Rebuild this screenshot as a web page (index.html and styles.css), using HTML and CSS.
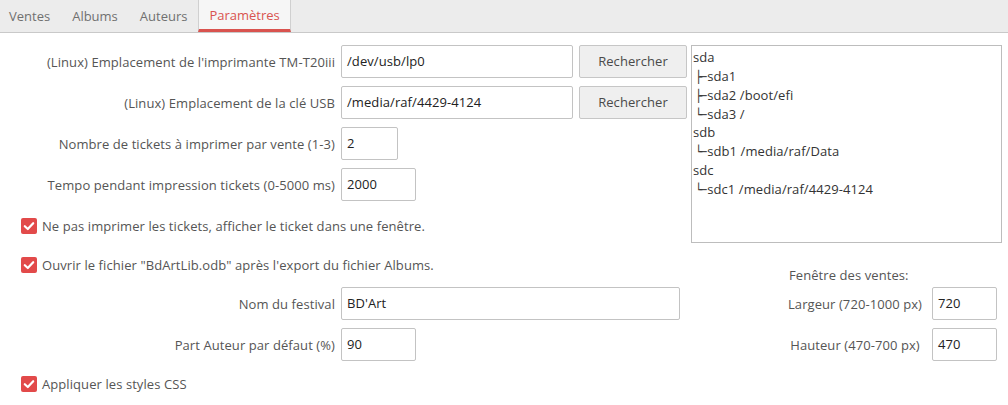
FILE: index.html
```html
<!DOCTYPE html>
<html lang="fr">
<head>
<meta charset="utf-8">
<title>Paramètres</title>
<link rel="stylesheet" href="styles.css">
</head>
<body>
<div class="tabs">
  <div class="tab first">Ventes</div>
  <div class="tab">Albums</div>
  <div class="tab">Auteurs</div>
  <div class="tab active">Paramètres</div>
</div>
<div class="content">
  <div class="top">
    <label class="lbl">(Linux) Emplacement de l'imprimante TM-T20iii</label>
    <div class="field">/dev/usb/lp0</div>
    <div class="btn">Rechercher</div>
    <div class="tree">
      <div class="ln">sda</div>
      <div class="ln"><span class="bx">├─</span>sda1</div>
      <div class="ln"><span class="bx">├─</span>sda2 /boot/efi</div>
      <div class="ln"><span class="bx">└─</span>sda3 /</div>
      <div class="ln">sdb</div>
      <div class="ln"><span class="bx">└─</span>sdb1 /media/raf/Data</div>
      <div class="ln">sdc</div>
      <div class="ln"><span class="bx">└─</span>sdc1 /media/raf/4429-4124</div>
    </div>

    <label class="lbl">(Linux) Emplacement de la clé USB</label>
    <div class="field">/media/raf/4429-4124</div>
    <div class="btn">Rechercher</div>

    <label class="lbl">Nombre de tickets à imprimer par vente (1-3)</label>
    <div class="cell"><div class="field xs">2</div></div>
    <div></div>

    <label class="lbl">Tempo pendant impression tickets (0-5000 ms)</label>
    <div class="cell"><div class="field sm">2000</div></div>
    <div></div>

    <div class="check span3"><span class="box"><svg viewBox="0 0 16 16" width="16" height="16"><path d="M3.8 8.2 L6.8 11 L12.2 5.2" fill="none" stroke="#fff" stroke-width="2.2" stroke-linecap="round" stroke-linejoin="round"/></svg></span>Ne pas imprimer les tickets, afficher le ticket dans une fenêtre.</div>
  </div>

  <div class="bottom">
    <div class="check span3 chkA"><span class="box"><svg viewBox="0 0 16 16" width="16" height="16"><path d="M3.8 8.2 L6.8 11 L12.2 5.2" fill="none" stroke="#fff" stroke-width="2.2" stroke-linecap="round" stroke-linejoin="round"/></svg></span>Ouvrir le fichier "BdArtLib.odb" après l'export du fichier Albums.</div>
    <div class="title">Fenêtre des ventes:</div>

    <label class="lbl">Nom du festival</label>
    <div class="field fest">BD'Art</div>
    <div></div>
    <label class="rlbl">Largeur (720-1000 px)</label>
    <div class="field rs">720</div>

    <label class="lbl">Part Auteur par défaut (%)</label>
    <div class="cell"><div class="field sm">90</div></div>
    <div></div>
    <label class="rlbl">Hauteur (470-700 px)</label>
    <div class="field rs">470</div>

    <div class="check span3"><span class="box"><svg viewBox="0 0 16 16" width="16" height="16"><path d="M3.8 8.2 L6.8 11 L12.2 5.2" fill="none" stroke="#fff" stroke-width="2.2" stroke-linecap="round" stroke-linejoin="round"/></svg></span>Appliquer les styles CSS</div>
  </div>
</div>
</body>
</html>
```
FILE: styles.css
```css
* { box-sizing: border-box; }
html, body { margin: 0; padding: 0; background: #fff; }
body {
  font-family: "Open Sans", "Noto Sans", "DejaVu Sans", sans-serif;
  font-size: 13px;
  letter-spacing: 0.08px;
  color: #555;
  width: 1008px;
  height: 405px;
  overflow: hidden;
}
.tabs {
  display: flex;
  height: 33px;
  background: #ececec;
  border-bottom: 1px solid #c9c9c9;
  letter-spacing: 0;
}
.tab {
  padding: 0 10px;
  line-height: 32px;
  color: #707070;
  border-left: 1px solid transparent;
  border-right: 1px solid transparent;
}
.tab.first { margin-left: -2px; }
.tab.active {
  background: #f6f6f6;
  color: #d9534f;
  border-left-color: #d0d0d0;
  border-right-color: #d0d0d0;
  border-bottom: 3px solid #d9534f;
  line-height: 30px;
}
.content { padding-top: 12px; }
.top {
  display: grid;
  grid-template-columns: 335px 232px 108px 309px;
  grid-template-rows: 33px 33px 33px 33px 34px;
  column-gap: 6px;
  row-gap: 8px;
}
.lbl {
  text-align: right;
  align-self: center;
  color: #555;
  white-space: nowrap;
}
.field {
  height: 33px;
  border: 1px solid #c3c3c3;
  border-radius: 2px;
  background: #fff;
  color: #222;
  padding: 0 5px;
  line-height: 31px;
  white-space: nowrap;
}
.field.xs { width: 57px; }
.field.sm { width: 75px; }
.field.fest { width: 339px; }
.field.rs { width: 65px; }
.btn {
  height: 33px;
  border: 1px solid #c6c6c6;
  border-radius: 2px;
  background: #efefef;
  color: #4a4a4a;
  text-align: center;
  line-height: 31px;
}
.tree {
  grid-column: 4;
  grid-row: 1 / 6;
  margin-left: -2px;
  border: 1px solid #bdbdbd;
  padding: 2px 0 0 1px;
  color: #333;
}
.ln {
  height: 18.85px;
  line-height: 18.85px;
  white-space: nowrap;
  overflow: visible;
}
.bx {
  font-family: "DejaVu Sans Mono", monospace;
  font-size: 12px;
  line-height: 1;
  letter-spacing: -2.6px;
  margin-left: 2px;
  margin-right: 3px;
  color: #333;
}
.check {
  display: flex;
  align-items: center;
  gap: 5px;
  padding-left: 21px;
  color: #555;
  white-space: nowrap;
}
.box {
  width: 16px;
  height: 16px;
  border-radius: 2px;
  background: #e24a4a;
  display: flex;
  flex: none;
}
.span3 { grid-column: 1 / 4; }
.bottom {
  display: grid;
  grid-template-columns: 335px 339px 1fr 142px 65px;
  grid-template-rows: 36px 33px 33px 30px;
  column-gap: 6px;
  row-gap: 8px;
  width: 997px;
}
.chkA {
  align-self: start;
  height: 20px;
  margin-top: 12px;
}
.title {
  grid-column: 4 / 6;
  align-self: end;
  padding-left: 5px;
  line-height: 18px;
  margin-bottom: -5px;
}
.rlbl {
  text-align: center;
  align-self: center;
  white-space: nowrap;
}
```
